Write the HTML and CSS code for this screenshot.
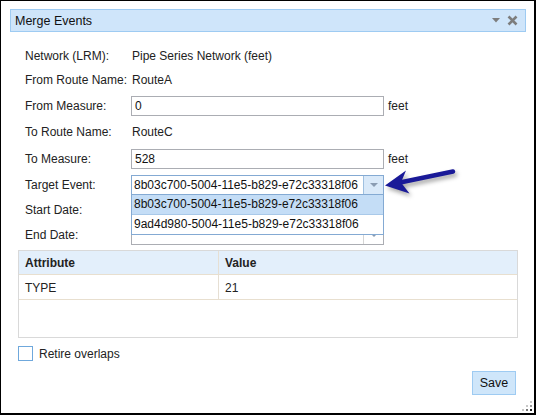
FILE: index.html
```html
<!DOCTYPE html>
<html lang="en">
<head>
    <meta charset="UTF-8">
    <title>Merge Events</title>
    <link rel="stylesheet" href="styles.css">
</head>
<body>
    <div class="window">
        <div class="titlebar">
            <span class="title">Merge Events</span>
            <span class="tools">
                <svg width="8" height="5" viewBox="0 0 8 5"><path d="M0 0h8L4 4.5z" fill="#7d7d7d"/></svg>
                <svg width="11" height="11" viewBox="0 0 11 11"><path d="M1.5 1.5l8 8M9.5 1.5l-8 8" stroke="#7d7d7d" stroke-width="2.6"/></svg>
            </span>
        </div>

        <div class="form">
            <div class="label">Network (LRM):</div>
            <div class="value wide">Pipe Series Network (feet)</div>

            <div class="label">From Route Name:</div>
            <div class="value wide">RouteA</div>

            <div class="label">From Measure:</div>
            <div class="input">0</div>
            <div class="unit">feet</div>

            <div class="label">To Route Name:</div>
            <div class="value wide">RouteC</div>

            <div class="label">To Measure:</div>
            <div class="input">528</div>
            <div class="unit">feet</div>

            <div class="label">Target Event:</div>
            <div class="select-wrap">
                <div class="select focused">
                    <span class="select-text">8b03c700-5004-11e5-b829-e72c33318f06</span>
                    <span class="select-btn"><i class="tri"></i></span>
                </div>
                <div class="menu">
                    <div class="menu-item selected">8b03c700-5004-11e5-b829-e72c33318f06</div>
                    <div class="menu-item">9ad4d980-5004-11e5-b829-e72c33318f06</div>
                </div>
            </div>
            <div class="unit"></div>

            <div class="label">Start Date:</div>
            <div class="select">
                <span class="select-text"></span>
                <span class="select-btn plain"><i class="tri"></i></span>
            </div>
            <div class="unit"></div>

            <div class="label">End Date:</div>
            <div class="select">
                <span class="select-text"></span>
                <span class="select-btn plain"><i class="tri"></i></span>
            </div>
            <div class="unit"></div>
        </div>

        <div class="grid">
            <div class="grid-row head">
                <div class="cell first">Attribute</div>
                <div class="cell">Value</div>
            </div>
            <div class="grid-row data">
                <div class="cell first">TYPE</div>
                <div class="cell">21</div>
            </div>
        </div>

        <label class="check"><span class="box"></span>Retire overlaps</label>

        <div class="actions">
            <button class="save">Save</button>
        </div>

        <svg class="grip" width="12" height="12" viewBox="0 0 12 12">
            <rect x="9" y="1" width="2" height="2" fill="#c8c8c8"/>
            <rect x="5" y="5" width="2" height="2" fill="#c8c8c8"/>
            <rect x="9" y="5" width="2" height="2" fill="#9a9a9a"/>
            <rect x="1" y="9" width="2" height="2" fill="#c8c8c8"/>
            <rect x="5" y="9" width="2" height="2" fill="#777"/>
            <rect x="9" y="9" width="2" height="2" fill="#222"/>
        </svg>

        <!-- callout arrow drawn over the dialog -->
        <svg class="callout" width="80" height="36" viewBox="380 164 80 36">
            <path d="M453 171.5L400 182.5" stroke="#1a1a98" stroke-width="4.4" stroke-linecap="round"/>
            <path d="M385 185.5L406 170.5L401 182.5L409.5 193.5z" fill="#1a1a98"/>
        </svg>
    </div>
</body>
</html>
```

FILE: styles.css
```css
body {
    margin: 0;
    font-family: "Liberation Sans", Arial, sans-serif;
    font-size: 12px;
    color: #222;
}
.window {
    position: relative;
    width: 536px;
    height: 415px;
    box-sizing: border-box;
    border: 1px solid #000;
    border-right-width: 2px;
    border-bottom-width: 2px;
    background: #fff;
}
.titlebar {
    display: flex;
    align-items: center;
    justify-content: space-between;
    height: 21px;
    margin: 8px 8px 0 9px;
    padding: 0 7px 0 4px;
    background-color: #cfe5fa;
    border: 1px solid #9ecbf2;
    font-size: 12.5px;
    color: #111;
}
.tools {
    display: flex;
    align-items: center;
    gap: 7px;
}
.form {
    display: grid;
    grid-template-columns: 106px 253px 1fr;
    grid-template-rows: 24px 24px 27px 26px 27px 25px 25px 26px;
    align-items: center;
    margin: 12px 0 0 24px;
}
.value {
    padding-left: 1px;
}
.wide {
    grid-column: span 2;
}
.input, .select {
    height: 18px;
    line-height: 18px;
    border: 1px solid #abadb3;
    padding-left: 3px;
    box-sizing: content-box;
    width: 248px;
    color: #111;
}
.unit {
    padding-left: 4px;
}
.select {
    display: flex;
    width: 251px;
    padding-left: 0;
}
.select.focused {
    border-color: #84aad3;
}
.select-text {
    flex: 1;
    padding-left: 2px;
}
.select-btn {
    width: 19px;
    border-left: 1px solid #9fc0e0;
    background-color: #d9e9f9;
    display: flex;
    align-items: center;
    justify-content: center;
}
.select-btn.plain {
    background-color: #fff;
    border-left-color: #d5d5d5;
}
.tri {
    width: 0;
    height: 0;
    border-left: 4px solid transparent;
    border-right: 4px solid transparent;
    border-top: 4px solid #8a9cb2;
}
.select-wrap {
    position: relative;
}
.menu {
    position: absolute;
    left: 0;
    top: 100%;
    width: 251px;
    border: 1px solid #84aad3;
    border-top: none;
    background: #fff;
    z-index: 3;
}
.menu-item {
    height: 19px;
    line-height: 19px;
    padding-left: 2px;
    color: #111;
}
.menu-item.selected {
    background-color: #c4ddf6;
    border-bottom: 1px solid #a9c9e9;
}
.grid {
    margin: 2px 0 0 17px;
    width: 500px;
    height: 88px;
    box-sizing: border-box;
    border: 1px solid #d9d9d9;
}
.grid-row {
    display: flex;
    height: 24px;
    line-height: 24px;
    border-bottom: 1px solid #e8dfcf;
}
.grid-row.head {
    height: 23px;
    line-height: 24px;
    background-color: #e3effb;
    font-weight: bold;
}
.grid-row.data {
    height: 24px;
    line-height: 27px;
}
.cell {
    padding-left: 6px;
}
.cell.first {
    width: 193px;
    border-right: 1px solid #e6dfd3;
}
.check {
    display: flex;
    align-items: center;
    gap: 6px;
    margin: 8px 0 0 17px;
    height: 15px;
}
.box {
    width: 13px;
    height: 13px;
    border: 1px solid #6fa8dc;
}
.actions {
    display: flex;
    justify-content: flex-end;
    margin: 10px 18px 0 0;
}
.save {
    height: 24px;
    width: 44px;
    padding: 0;
    font-family: inherit;
    font-size: 12.5px;
    color: #111;
    background-color: #cfe6fa;
    border: 1px solid #9ecbf2;
}
.grip {
    position: absolute;
    right: 1px;
    bottom: 1px;
}
.callout {
    position: absolute;
    left: 379px;
    top: 163px;
    overflow: visible;
    filter: drop-shadow(2px 3px 2px rgba(0, 0, 0, 0.35));
}
```
